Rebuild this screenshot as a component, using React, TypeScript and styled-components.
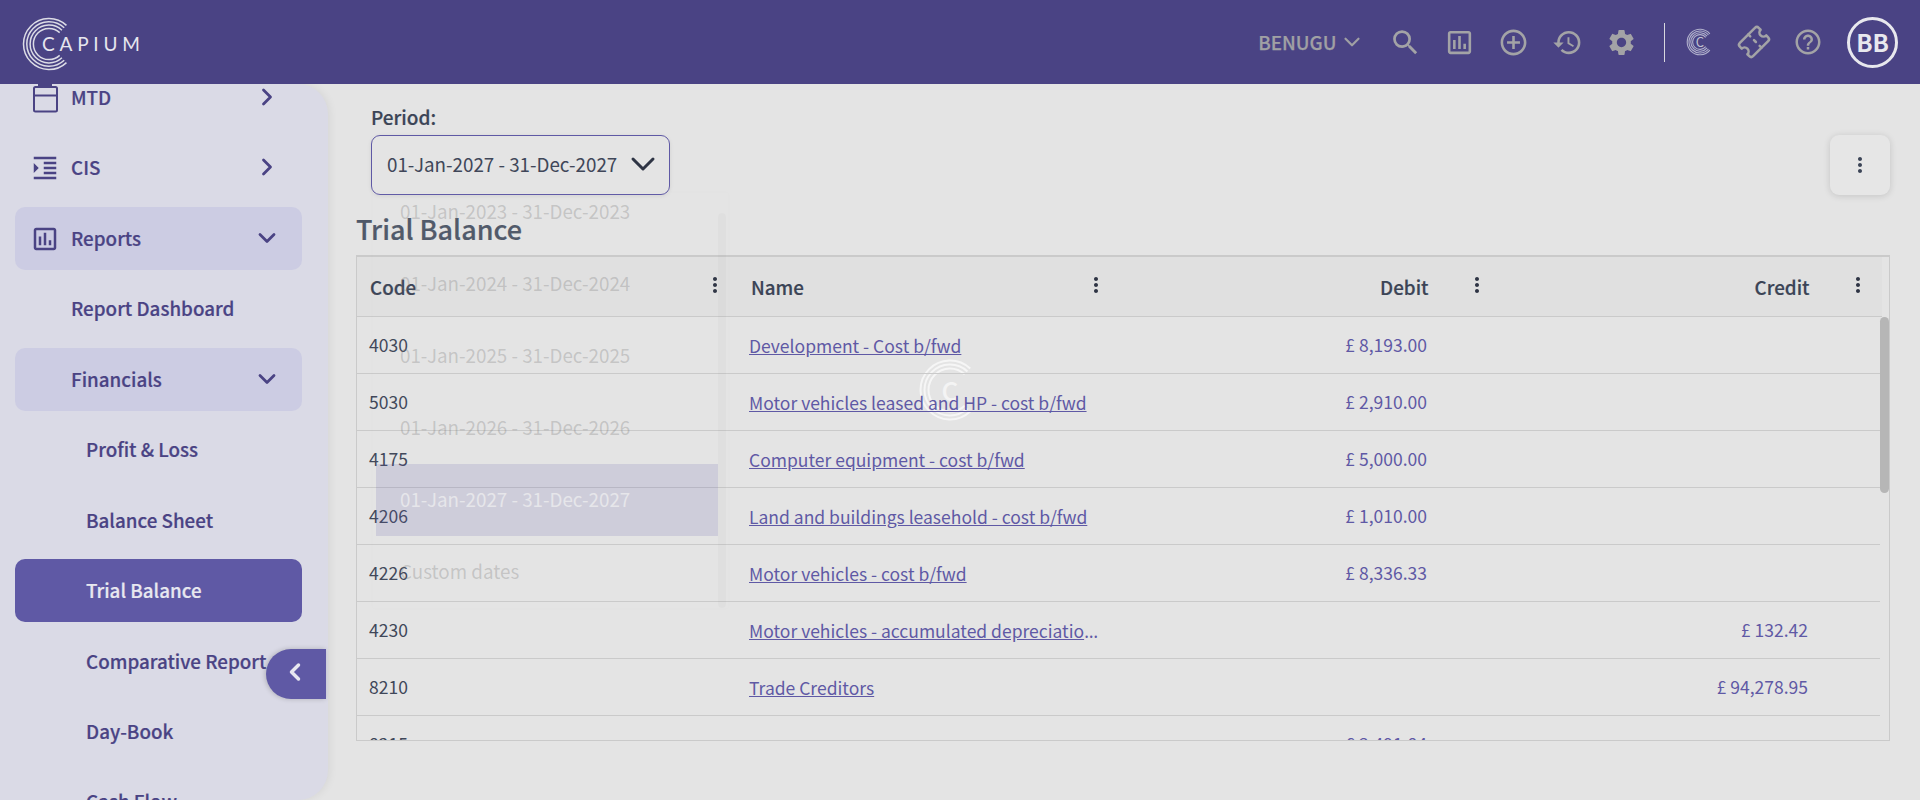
import styled, { createGlobalStyle } from "styled-components";
import { ChevronDown, ChevronLeft, ChevronRight, Ticket } from "lucide-react";
import {
    MdAddCircleOutline,
    MdFormatIndentIncrease,
    MdHelpOutline,
    MdHistory,
    MdMoreVert,
    MdOutlineAssessment,
    MdSearch,
    MdSettings,
} from "react-icons/md";

const FONT = `"Noto Sans CJK SC", "Noto Sans", "Liberation Sans", sans-serif`;

const GlobalStyle = createGlobalStyle`
    html, body {
        margin: 0;
        height: 100%;
        background: #e4e4e4;
        font-family: ${FONT};
    }
    * {
        box-sizing: border-box;
    }
`;

const Page = styled.div`
    height: 800px;
    overflow: hidden;
    display: flex;
    flex-direction: column;
`;

const Header = styled.header`
    position: relative;
    z-index: 3;
    flex: 0 0 84px;
    display: flex;
    align-items: center;
    justify-content: space-between;
    padding: 0 22px 0 22px;
    background: #4a4384;
`;

const Logo = styled.div`
    display: flex;
    align-items: center;
    margin-top: 3px;
`;

const LogoText = styled.span`
    margin-left: -34px;
    font-family: Lato, sans-serif;
    font-size: 19px;
    font-weight: 400;
    letter-spacing: 4.8px;
    line-height: 24px;
    color: #e6e6ee;
`;

const HeaderRight = styled.div`
    display: flex;
    align-items: center;
`;

const Company = styled.div`
    display: flex;
    align-items: center;
    gap: 2.5px;
    margin-right: 13px;
    font-size: 18.8px;
    font-weight: 500;
    line-height: 24px;
    -webkit-text-stroke: 0.25px #a0a0a4;
    color: #a0a0a4;
`;

const IconSlot = styled.div`
    position: relative;
    width: 54px;
    display: flex;
    align-items: center;
    justify-content: center;
    color: #a3a3a6;
`;

const Divider = styled.div`
    width: 1px;
    height: 39px;
    margin: 0 8px 0 16px;
    background: #d8d8df;
`;

const Avatar = styled.div`
    width: 51px;
    height: 51px;
    margin-left: 12px;
    display: flex;
    align-items: center;
    justify-content: center;
    border: 3px solid #e8e8ee;
    border-radius: 50%;
    font-size: 24px;
    font-weight: 600;
    line-height: 28px;
    color: #e8e8ee;
`;

const Body = styled.div`
    flex: 1;
    min-height: 0;
    display: flex;
`;

const Sidebar = styled.aside`
    position: relative;
    flex: 0 0 328px;
    height: 716px;
    border-radius: 0 30px 30px 0;
    background: #dadae6;
    box-shadow: 2px 0 8px rgba(0, 0, 0, 0.06);
`;

const NavClip = styled.div`
    height: 100%;
    overflow: hidden;
    border-radius: 0 30px 30px 0;
`;

const NavList = styled.nav`
    display: flex;
    flex-direction: column;
    gap: 7.45px;
    padding: 0 26px 0 15px;
    margin-top: -18px;
`;

const NavItem = styled.div<{ $level?: number; $open?: boolean; $active?: boolean }>`
    flex: 0 0 63px;
    display: flex;
    align-items: center;
    padding: 0 21px 1px ${(props) => (props.$level === 2 ? 71 : 56)}px;
    border-radius: 10px;
    font-size: 18.8px;
    font-weight: 500;
    line-height: 24px;
    white-space: nowrap;
    -webkit-text-stroke: 0.2px currentColor;
    color: ${(props) => (props.$active ? "#e8e8f0" : "#4a4384")};
    background: ${(props) =>
        props.$active ? "#5f59a5" : props.$open ? "#cccce3" : "transparent"};
    & > span {
        flex: 1;
    }
`;

const NavIcon = styled.div`
    width: 38px;
    margin-left: -38px;
    display: flex;
    align-items: center;
    justify-content: flex-start;
    transform: translate(-3px, 1px);
`;

const CollapseButton = styled.button`
    position: absolute;
    top: 565px;
    right: 2px;
    width: 60px;
    height: 50px;
    padding: 0 0 4px 15px;
    display: flex;
    align-items: center;
    justify-content: flex-start;
    border: none;
    border-radius: 25px 0 0 25px;
    background: #5f59a5;
    color: #e8e8f0;
    box-shadow: -1px 0 5px rgba(0, 0, 0, 0.2);
`;

const Main = styled.main`
    position: relative;
    flex: 1;
    min-width: 0;
    padding: 22px 30px 0 28px;
`;

const Toolbar = styled.div`
    display: flex;
    align-items: flex-end;
    justify-content: space-between;
    padding-left: 15px;
`;

const Field = styled.div`
    display: flex;
    flex-direction: column;
`;

const FieldLabel = styled.label`
    height: 29px;
    font-size: 19px;
    font-weight: 500;
    line-height: 22px;
    -webkit-text-stroke: 0.2px currentColor;
    color: #3b4456;
`;

const Select = styled.div`
    width: 299px;
    height: 60px;
    display: flex;
    align-items: center;
    justify-content: space-between;
    padding: 0 6px 3px 15px;
    border: 1px solid #5f59a5;
    border-radius: 9px;
    font-size: 18.8px;
    line-height: 24px;
    white-space: nowrap;
    color: #3f4759;
    box-shadow: 0 1px 4px rgba(0, 0, 0, 0.08);
`;

const MenuButton = styled.button`
    width: 60px;
    height: 60px;
    display: flex;
    align-items: center;
    justify-content: center;
    border: none;
    border-radius: 9px;
    background: #e6e6e6;
    color: #3b4456;
    box-shadow: 0 1px 7px rgba(0, 0, 0, 0.14);
`;

const Title = styled.h1`
    margin: 0;
    padding: 16px 0 8px;
    font-size: 27px;
    font-weight: 500;
    line-height: 36px;
    -webkit-text-stroke: 0.2px currentColor;
    color: #4f5868;
`;

const TableWrap = styled.div`
    position: relative;
    z-index: 1;
    width: 1534px;
    height: 486px;
    overflow: hidden;
    border: 1px solid #cacaca;
    border-top-width: 2px;
`;

const HeaderRow = styled.div`
    width: 1525px;
    height: 60px;
    display: grid;
    grid-template-columns: repeat(4, 381px);
    background: #e0e0e0;
    border-bottom: 1px solid #cacaca;
`;

const HeaderCell = styled.div<{ $right?: boolean }>`
    display: flex;
    align-items: center;
    justify-content: ${(props) => (props.$right ? "flex-end" : "space-between")};
    gap: 36px;
    padding: 0 11.5px 0 13px;
    font-size: 18.8px;
    font-weight: 500;
    line-height: 24px;
    -webkit-text-stroke: 0.2px currentColor;
    color: #3b4456;
    & > svg {
        margin-top: -4px;
        color: #2e3444;
    }
`;

const Row = styled.div`
    width: 1523px;
    height: 57px;
    padding-bottom: 1px;
    display: grid;
    grid-template-columns: repeat(4, 381px);
    align-items: center;
    border-bottom: 1px solid #cacaca;
`;

const CodeCell = styled.div`
    padding-left: 12px;
    font-size: 17.5px;
    line-height: 24px;
    color: #3f4759;
`;

const NameCell = styled.div`
    padding: 3px 0 0 11px;
    width: 364px;
    overflow: hidden;
    white-space: nowrap;
    text-overflow: ellipsis;
    font-family: "Noto Sans", sans-serif;
    font-size: 17.5px;
    line-height: 24px;
    color: #5f59a5;
`;

const NameLink = styled.a`
    font-family: ${FONT};
    color: #5f59a5;
    text-decoration: underline;
`;

const AmountCell = styled.div`
    padding-right: 73px;
    text-align: right;
    font-size: 17.5px;
    line-height: 24px;
    color: #5f59a5;
`;

const ScrollThumb = styled.div`
    position: absolute;
    top: 60px;
    right: 0;
    width: 9px;
    height: 176px;
    border-radius: 5px;
    background: #b6b6b6;
`;

const Dropdown = styled.div`
    position: absolute;
    z-index: 2;
    top: 109px;
    left: 45px;
    width: 355px;
    height: 415px;
    background: rgba(255, 255, 255, 0.015);
    box-shadow: 0 0 6px rgba(0, 0, 0, 0.015);
    pointer-events: none;
`;

const OptionList = styled.div`
    width: 342px;
    margin: -17px 0 0 3px;
`;

const Option = styled.div<{ $selected?: boolean }>`
    height: 72px;
    display: flex;
    align-items: center;
    padding: 0 0 2px 24px;
    font-size: 18.8px;
    line-height: 24px;
    color: ${(props) => (props.$selected ? "#e6e6ea" : "rgba(120, 120, 120, 0.3)")};
    background: ${(props) => (props.$selected ? "rgba(95, 89, 165, 0.16)" : "transparent")};
`;

const DropdownTrack = styled.div`
    position: absolute;
    top: 20px;
    right: 2px;
    width: 8px;
    height: 395px;
    border-radius: 4px;
    background: rgba(0, 0, 0, 0.02);
`;

// sits under the table, the row texts stay readable across its rings
const Loader = styled.div`
    position: absolute;
    top: 274px;
    left: 590px;
    width: 64px;
    height: 64px;
    pointer-events: none;
`;

const LoaderLetter = styled.span`
    position: absolute;
    inset: 0;
    display: flex;
    align-items: center;
    justify-content: center;
    font-size: 26px;
    font-weight: 500;
    line-height: 26px;
    color: #f4f4f4;
`;

const BrandMark = styled.div`
    position: relative;
    width: 28px;
    height: 28px;
`;

const BrandLetter = styled.span`
    position: absolute;
    inset: 0;
    display: flex;
    align-items: center;
    justify-content: center;
    font-size: 13px;
    line-height: 14px;
    color: #c0c0d0;
`;

// rings of the logo, all of them open towards the right
function Rings({ size, radii, width, color, openAt = 0.13 }: { size: number; radii: number[]; width: number; color: string; openAt?: number }) {
    const c = size / 2;
    return (
        <svg width={size} height={size} viewBox={`0 0 ${size} ${size}`} fill="none">
            {radii.map((r) => {
                const a = Math.PI * 2 * openAt;
                const x = c + r * Math.cos(a);
                const y = r * Math.sin(a);
                return (
                    <path
                        key={r}
                        d={`M${x} ${c - y}A${r} ${r} 0 1 0 ${x} ${c + y}`}
                        stroke={color}
                        strokeWidth={width}
                    />
                );
            })}
        </svg>
    );
}

function CalendarIcon() {
    return (
        <svg width="28" height="29" viewBox="0 0 28 29" fill="none" stroke="#4a4384" strokeWidth="2">
            <path d="M8 1h14" />
            <rect x="4" y="3" width="23" height="24.5" rx="1.5" />
            <path d="M4 11.5h23" />
        </svg>
    );
}

const amountRows = [
    { code: "4030", name: "Development - Cost b/fwd", debit: "£ 8,193.00", credit: "" },
    { code: "5030", name: "Motor vehicles leased and HP - cost b/fwd", debit: "£ 2,910.00", credit: "" },
    { code: "4175", name: "Computer equipment - cost b/fwd", debit: "£ 5,000.00", credit: "" },
    { code: "4206", name: "Land and buildings leasehold - cost b/fwd", debit: "£ 1,010.00", credit: "" },
    { code: "4226", name: "Motor vehicles - cost b/fwd", debit: "£ 8,336.33", credit: "" },
    { code: "4230", name: "Motor vehicles - accumulated depreciation - b/fwd", debit: "", credit: "£ 132.42" },
    { code: "8210", name: "Trade Creditors", debit: "", credit: "£ 94,278.95" },
    { code: "8215", name: "", debit: "£ 3,491.84", credit: "" },
];

const periods = [
    "01-Jan-2023 - 31-Dec-2023",
    "01-Jan-2024 - 31-Dec-2024",
    "01-Jan-2025 - 31-Dec-2025",
    "01-Jan-2026 - 31-Dec-2026",
    "01-Jan-2027 - 31-Dec-2027",
    "Custom dates",
];

function App() {
    return (
        <Page>
            <GlobalStyle />
            <Header>
                <Logo>
                    <Rings size={54} radii={[25.5, 22.2, 18.9, 15.6]} width={1.5} color="#dcdce6" />
                    <LogoText>CAPIUM</LogoText>
                </Logo>
                <HeaderRight>
                    <Company>
                        BENUGU
                        <ChevronDown size={26} strokeWidth={2} />
                    </Company>
                    <IconSlot><MdSearch size={33} /></IconSlot>
                    <IconSlot><MdOutlineAssessment size={31} /></IconSlot>
                    <IconSlot><MdAddCircleOutline size={31} /></IconSlot>
                    <IconSlot><MdHistory size={31} /></IconSlot>
                    <IconSlot><MdSettings size={31} /></IconSlot>
                    <Divider />
                    <IconSlot>
                        <BrandMark>
                            <Rings size={28} radii={[12.8, 11, 9.2, 7.4]} width={1.1} color="#b0b0cc" openAt={0.11} />
                            <BrandLetter>C</BrandLetter>
                        </BrandMark>
                    </IconSlot>
                    <IconSlot>
                        <Ticket size={32} strokeWidth={1.9} style={{ transform: "rotate(-45deg)" }} />
                    </IconSlot>
                    <IconSlot><MdHelpOutline size={30} /></IconSlot>
                    <Avatar>BB</Avatar>
                </HeaderRight>
            </Header>
            <Body>
                <Sidebar>
                    <NavClip>
                        <NavList>
                            <NavItem>
                                <NavIcon><CalendarIcon /></NavIcon>
                                <span>MTD</span>
                                <ChevronRight size={28} strokeWidth={2.4} />
                            </NavItem>
                            <NavItem>
                                <NavIcon><MdFormatIndentIncrease size={30} /></NavIcon>
                                <span>CIS</span>
                                <ChevronRight size={28} strokeWidth={2.4} />
                            </NavItem>
                            <NavItem $open>
                                <NavIcon><MdOutlineAssessment size={30} /></NavIcon>
                                <span>Reports</span>
                                <ChevronDown size={28} strokeWidth={2.4} />
                            </NavItem>
                            <NavItem>Report Dashboard</NavItem>
                            <NavItem $open>
                                <span>Financials</span>
                                <ChevronDown size={28} strokeWidth={2.4} />
                            </NavItem>
                            <NavItem $level={2}>Profit &amp; Loss</NavItem>
                            <NavItem $level={2}>Balance Sheet</NavItem>
                            <NavItem $level={2} $active>Trial Balance</NavItem>
                            <NavItem $level={2}>Comparative Report</NavItem>
                            <NavItem $level={2}>Day-Book</NavItem>
                            <NavItem $level={2}>Cash Flow</NavItem>
                        </NavList>
                    </NavClip>
                    <CollapseButton aria-label="Collapse menu">
                        <ChevronLeft size={28} strokeWidth={3} />
                    </CollapseButton>
                </Sidebar>
                <Main>
                    <Toolbar>
                        <Field>
                            <FieldLabel>Period:</FieldLabel>
                            <Select>
                                01-Jan-2027 - 31-Dec-2027
                                <ChevronDown size={40} strokeWidth={1.8} color="#2e3444" />
                            </Select>
                        </Field>
                        <MenuButton aria-label="More">
                            <MdMoreVert size={24} />
                        </MenuButton>
                    </Toolbar>
                    <Title>Trial Balance</Title>
                    <TableWrap>
                        <HeaderRow>
                            <HeaderCell>Code<MdMoreVert size={24} /></HeaderCell>
                            <HeaderCell>Name<MdMoreVert size={24} /></HeaderCell>
                            <HeaderCell $right>Debit<MdMoreVert size={24} /></HeaderCell>
                            <HeaderCell $right>Credit<MdMoreVert size={24} /></HeaderCell>
                        </HeaderRow>
                        {amountRows.map((row) => (
                            <Row key={row.code}>
                                <CodeCell>{row.code}</CodeCell>
                                <NameCell><NameLink>{row.name}</NameLink></NameCell>
                                <AmountCell>{row.debit}</AmountCell>
                                <AmountCell>{row.credit}</AmountCell>
                            </Row>
                        ))}
                        <ScrollThumb />
                    </TableWrap>
                    <Dropdown>
                        <OptionList>
                            {periods.map((period, index) => (
                                <Option key={period} $selected={index === 4}>{period}</Option>
                            ))}
                        </OptionList>
                        <DropdownTrack />
                    </Dropdown>
                    <Loader>
                        <Rings size={64} radii={[29.5, 25.5, 21.5]} width={2} color="#f6f6f6" />
                        <LoaderLetter>C</LoaderLetter>
                    </Loader>
                </Main>
            </Body>
        </Page>
    );
}

export default App;
